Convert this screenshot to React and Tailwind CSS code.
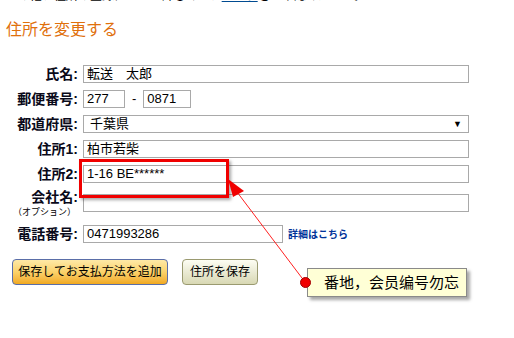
const JP = "font-['Liberation_Sans','Noto_Sans_CJK_JP',sans-serif]"
const INPUT = "h-[18px] border border-[#a9a9a9] bg-white px-[3px] text-[13px] leading-[16px] text-black"

function Row({ label, children, className = "" }) {
  return (
    <div className={`flex items-center ${className}`}>
      <div className="w-[78px] shrink-0 text-right text-[14px] font-bold leading-[18px] text-[#0a0a1a]">{label}</div>
      <div className="ml-[5px] flex items-center">{children}</div>
    </div>
  )
}

export default function App() {
  return (
    <div className={`relative h-[338px] w-[514px] overflow-hidden bg-white ${JP}`}>
      <p className="-mt-[11px] h-[14px] whitespace-nowrap pl-[6px] text-[12px] leading-[14px] text-black">
        その他、住所の登録について詳しくは、<span className="text-[#004b91] underline">ヘルプ</span>をご確認ください。
      </p>
      <h2 className="mt-[17px] pl-[6px] text-[16px] leading-[20px] text-[#e0700c]">住所を変更する</h2>

      <div className="mt-[25px] flex flex-col gap-[7px]">
        <Row label="氏名:">
          <div className={`${INPUT} w-[386px]`}>転送　太郎</div>
        </Row>
        <Row label="郵便番号:">
          <div className={`${INPUT} w-[42px]`}>277</div>
          <span className="mx-[7px] text-[13px] leading-[18px]">-</span>
          <div className={`${INPUT} w-[48px]`}>0871</div>
        </Row>
        <Row label="都道府県:">
          <div className={`${INPUT} flex w-[386px] items-center justify-between pl-[6px] pr-[6px]`}>
            <span>千葉県</span>
            <span className="text-[9px] leading-none">▼</span>
          </div>
        </Row>
        <Row label="住所1:">
          <div className={`${INPUT} w-[386px]`}>柏市若柴</div>
        </Row>
        <Row label="住所2:">
          <div className={`${INPUT} w-[386px]`}>1-16 BE******</div>
        </Row>
        <div className="flex items-start">
          <div className="w-[78px] shrink-0 text-right">
            <div className="text-[14px] font-bold leading-[15px] text-[#0a0a1a]">会社名:</div>
            <div className="mt-[1px] pr-[2px] text-[9px] leading-[12px] text-black">（オプション）</div>
          </div>
          <div className={`${INPUT} ml-[5px] mt-[4px] w-[386px]`}></div>
        </div>
        <Row label="電話番号:">
          <div className={`${INPUT} w-[200px]`}>0471993286</div>
          <span className="ml-[5px] text-[10px] font-bold text-[#003399]">詳細はこちら</span>
        </Row>
      </div>

      <div className="ml-[12px] mt-[16px] flex gap-[14px]">
        <button className="h-[26px] w-[156px] whitespace-nowrap rounded-[4px] border border-[#5a6ea8] bg-gradient-to-b from-[#fee9a6] via-[#fbd26a] to-[#f1a91c] text-[12px] text-black">
          保存してお支払方法を追加
        </button>
        <button className="h-[26px] w-[76px] whitespace-nowrap rounded-[4px] border border-[#9a9a70] bg-gradient-to-b from-[#fdfdf3] to-[#d8d8b4] text-[12px] text-black">
          住所を保存
        </button>
      </div>

      <div className="absolute left-[79px] top-[159px] h-[39px] w-[150px] border-[3px] border-[#f00000] shadow-[2px_2px_3px_rgba(0,0,0,0.35)]"></div>

      <svg className="absolute left-0 top-0" width="514" height="338">
        <line x1="237" y1="192" x2="305" y2="282" stroke="#ff2020" strokeWidth="1" />
        <polygon points="228,179 244,191 233,197" fill="#f00000" />
      </svg>

      <div className="absolute left-[307px] top-[268px] flex h-[29px] w-[160px] items-center border border-[#8a8a8a] bg-[#ffffd6] pl-[16px] text-[15px] text-black shadow-[3px_3px_3px_rgba(0,0,0,0.35)] font-['Noto_Sans_CJK_SC',sans-serif]">
        番地，会员编号勿忘
      </div>
      <div className="absolute left-[300px] top-[277px] h-[11px] w-[11px] rounded-full border border-[#a00000] bg-[#f00000]"></div>
    </div>
  )
}
